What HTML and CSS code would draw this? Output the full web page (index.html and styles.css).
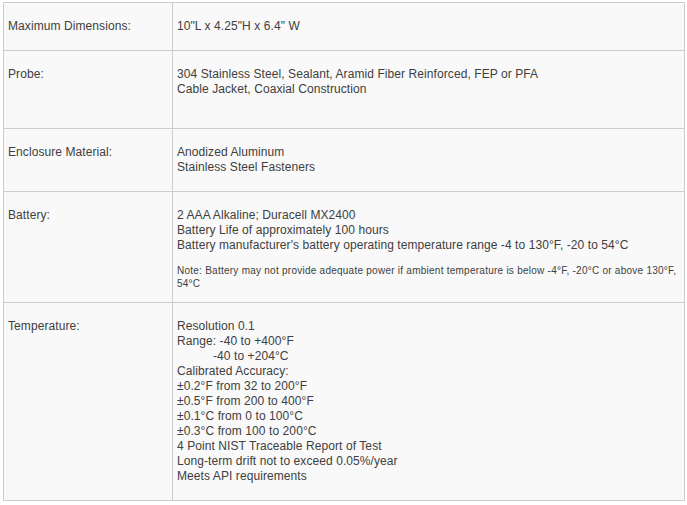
FILE: index.html
```html
<!DOCTYPE html>
<html>
<head>
<meta charset="utf-8">
<link rel="stylesheet" href="styles.css">
</head>
<body>
<table class="specs">
  <colgroup><col class="col-label"><col class="col-value"></colgroup>
  <tr>
    <td>Maximum Dimensions:</td>
    <td>10"L x 4.25"H x 6.4" W</td>
  </tr>
  <tr>
    <td>Probe:</td>
    <td class="extra">304 Stainless Steel, Sealant, Aramid Fiber Reinforced, FEP or PFA<br>Cable Jacket, Coaxial Construction</td>
  </tr>
  <tr>
    <td>Enclosure Material:</td>
    <td>Anodized Aluminum<br>Stainless Steel Fasteners</td>
  </tr>
  <tr>
    <td>Battery:</td>
    <td class="tight">2 AAA Alkaline; Duracell MX2400<br>Battery Life of approximately 100 hours<br>Battery manufacturer's battery operating temperature range -4 to 130°F, -20 to 54°C
      <p class="note">Note: Battery may not provide adequate power if ambient temperature is below -4°F, -20°C or above 130°F, 54°C</p>
    </td>
  </tr>
  <tr>
    <td>Temperature:</td>
    <td>Resolution 0.1<br>Range: -40 to +400°F<br><span class="indent">-40 to +204°C</span><br>Calibrated Accuracy:<br>±0.2°F from 32 to 200°F<br>±0.5°F from 200 to 400°F<br>±0.1°C from 0 to 100°C<br>±0.3°C from 100 to 200°C<br>4 Point NIST Traceable Report of Test<br>Long-term drift not to exceed 0.05%/year<br>Meets API requirements</td>
  </tr>
</table>
</body>
</html>
```

FILE: styles.css
```css
html, body {
  background: #ffffff;
}
body {
  margin: 2px 0 0 3px;
  font-family: "Liberation Sans", Arial, sans-serif;
  font-size: 12px;
  line-height: 15px;
  color: #404040;
  letter-spacing: 0.08px;
}
.specs {
  border-collapse: collapse;
  table-layout: fixed;
  width: 682px;
  background: #f9f9f9;
}
.col-label {
  width: 169px;
}
.specs td {
  border: 1px solid #cccccc;
  padding: 16px 5px 16px 4px;
  vertical-align: top;
  text-align: left;
}
.specs td.extra {
  padding-bottom: 31px;
}
.specs td.tight {
  padding-bottom: 12px;
}
.note {
  margin: 11px 0 0 0;
  font-size: 10px;
  line-height: 13px;
  letter-spacing: 0.25px;
}
.indent {
  padding-left: 36px;
}
```
